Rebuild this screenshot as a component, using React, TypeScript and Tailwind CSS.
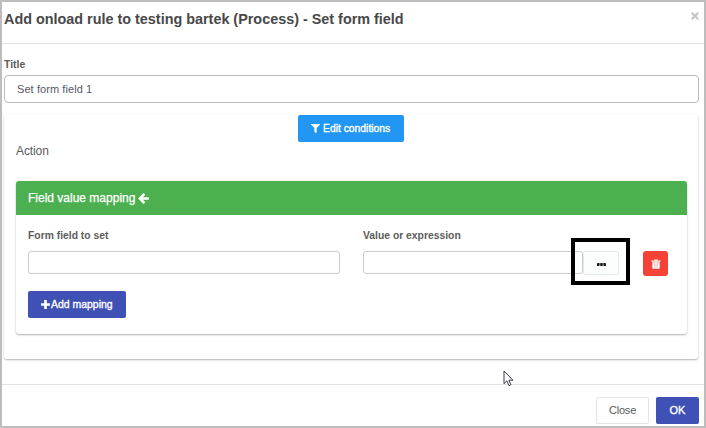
import { FaFilter } from "react-icons/fa";

function TrashIcon() {
  return (
    <svg viewBox="0 0 10 10" className="h-[10px] w-[10px]">
      <path d="M3.4 0.4h3.2v1H9.4v1.4H0.6V1.4h2.8z" fill="#fff" />
      <path d="M1.3 3.2h7.4v5.5a1 1 0 0 1-1 1H2.3a1 1 0 0 1-1-1z" fill="#fff" />
      <path d="M3.5 4.2v4.4M5 4.2v4.4M6.5 4.2v4.4" stroke="#f44336" strokeWidth="0.3" />
    </svg>
  );
}

function ArrowIcon() {
  return (
    <svg viewBox="0 0 11 11" className="h-[11px] w-[11px]" fill="none" stroke="#fff" strokeWidth="2.6">
      <path d="M6.4 0.9L1.9 5.5L6.4 10.1M2 5.5h8.8" />
    </svg>
  );
}

function PlusIcon() {
  return (
    <svg viewBox="0 0 9 9" className="h-[9px] w-[9px]" fill="none" stroke="#fff" strokeWidth="2.7">
      <path d="M4.5 0.1v8.8M0.1 4.5h8.8" />
    </svg>
  );
}

function Dots() {
  return (
    <svg viewBox="0 0 9 3" className="h-[3px] w-[9px]" fill="#111">
      <rect x="0" width="2.5" height="3" rx="0.4" />
      <rect x="3.2" width="2.5" height="3" rx="0.4" />
      <rect x="6.4" width="2.5" height="3" rx="0.4" />
    </svg>
  );
}

function Header() {
  return (
    <header className="flex h-[42px] shrink-0 items-start justify-between border-b border-[#e3e3e3] pr-[5px] pl-[2px]">
      <h1 className="mt-[7px] origin-left scale-x-[0.959] text-[15px] leading-5 font-bold whitespace-nowrap text-[#484848]">
        Add onload rule to testing bartek (Process) - Set form field
      </h1>
      <button aria-label="Dismiss" className="mt-[10px] flex h-[8px] w-[9px] items-center justify-center">
        <svg viewBox="0 0 8 8" className="h-[8px] w-[8px]" stroke="#c4c4c4" strokeWidth="2">
          <path d="M0.8 0.8L7.2 7.2M7.2 0.8L0.8 7.2" />
        </svg>
      </button>
    </header>
  );
}

function MappingPanel() {
  return (
    <section className="mx-[11px] mt-[22px] h-[153px] rounded-[3px] bg-white shadow-[0_1px_2px_rgba(0,0,0,0.32)]">
      <div className="flex h-[34px] items-center gap-[3px] rounded-t-[3px] bg-[#4caf50] pl-3 text-[12px] font-normal text-white">
        <span className="[-webkit-text-stroke:0.25px_white]">Field value mapping</span>
        <ArrowIcon />
      </div>
      <div className="flex pt-[13px] pl-3">
        <div className="w-[312px]">
          <label className="block h-[14px] origin-left scale-x-[0.94] text-[11px] leading-[14px] font-bold text-[#5c5c5c]">Form field to set</label>
          <div className="mt-[9px] h-[23px] rounded-[3px] border border-[#ccc]" />
        </div>
        <div className="ml-[23px] w-[256px]">
          <label className="block h-[14px] origin-left scale-x-[0.94] text-[11px] leading-[14px] font-bold text-[#5c5c5c]">Value or expression</label>
          <div className="relative mt-[9px] flex">
            <div className="h-[23px] w-[220px] rounded-[3px] border border-[#ccc]" />
            <button aria-label="Choose expression" className="flex h-6 w-9 items-center justify-center rounded-[2px] border border-[#e3e8e9] bg-[#fcfefe] pt-[2px]">
              <Dots />
            </button>
            <div className="absolute -top-[13px] left-[208px] h-[47px] w-[59px] border-4 border-black" />
          </div>
        </div>
        <button aria-label="Delete mapping" className="mt-[23px] ml-[24px] flex h-[25px] w-[25px] items-center justify-center rounded-[3px] bg-[#f44336]">
          <TrashIcon />
        </button>
      </div>
      <button className="mt-[15px] ml-3 flex h-[27px] w-[98px] items-center rounded-[2px] bg-[#3f51b5] pl-[13px] text-[11px] text-white">
        <PlusIcon />
        <span className="ml-px origin-left scale-x-[0.95] whitespace-nowrap [-webkit-text-stroke:0.35px_white]">Add mapping</span>
      </button>
    </section>
  );
}

export default function App() {
  return (
    <div className="flex h-[428px] w-[706px] flex-col overflow-hidden border-2 border-[#bdbdbd] bg-white font-['Liberation_Sans',Arial,sans-serif]">
      <Header />
      <main className="relative h-[341px] shrink-0 border-b border-[#e3e3e3] pr-[5px] pl-[2px]">
        <label className="block origin-left scale-x-[0.95] pt-[13px] text-[11px] leading-[14px] font-bold text-[#5c5c5c]">Title</label>
        <div className="mt-1 flex h-[28px] items-center rounded-[4px] border border-[#bbb] pt-px pl-3 text-[11px] tracking-[0.08px] text-[#555966]">
          Set form field 1
        </div>
        <section className="mt-[11px] mr-px h-[245px] rounded-[3px] pl-px shadow-[0_1px_2px_rgba(0,0,0,0.3)]">
          <div className="flex justify-center pt-px pr-[2px]">
            <button className="flex h-[27px] w-[106px] items-center rounded-[2px] bg-[#2196f3] pl-[13px] text-[11px] text-white">
              <FaFilter className="h-[9px] w-[9px]" />
              <span className="ml-[3px] origin-left scale-x-[0.94] whitespace-nowrap [-webkit-text-stroke:0.35px_white]">Edit conditions</span>
            </button>
          </div>
          <p className="mt-[2px] ml-[11px] h-[15px] text-[12px] leading-[15px] tracking-[-0.1px] text-[#5c5c5c]">Action</p>
          <MappingPanel />
        </section>
        <svg viewBox="0 0 12 17" className="absolute top-[326px] left-[501px] h-[17px] w-[12px]">
          <path d="M1 1v12.7l2.9-2.8 2 4.7 2-.9-2-4.5h4.1z" fill="#fff" stroke="#39394a" strokeWidth="1" />
        </svg>
      </main>
      <footer className="flex justify-end gap-[7px] pt-[12px] pr-[5px]">
        <button className="h-[27px] w-[53px] rounded-[2px] border border-[#e5e5e5] text-[11px] tracking-[-0.2px] text-[#5c5c5c]">Close</button>
        <button className="h-[27px] w-[43px] rounded-[2px] bg-[#3f51b5] text-[11px] text-white [-webkit-text-stroke:0.35px_white]">OK</button>
      </footer>
    </div>
  );
}
